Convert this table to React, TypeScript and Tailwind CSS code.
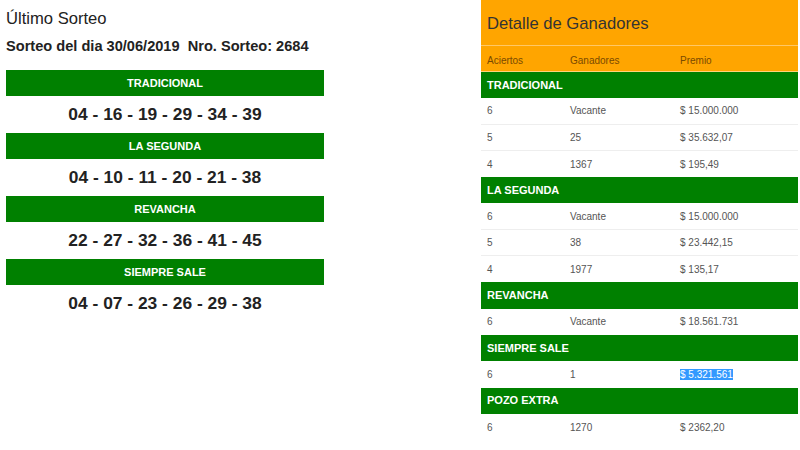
const draws = [
  { name: "TRADICIONAL", nums: "04 - 16 - 19 - 29 - 34 - 39" },
  { name: "LA SEGUNDA", nums: "04 - 10 - 11 - 20 - 21 - 38" },
  { name: "REVANCHA", nums: "22 - 27 - 32 - 36 - 41 - 45" },
  { name: "SIEMPRE SALE", nums: "04 - 07 - 23 - 26 - 29 - 38" },
];

type Row = [string, string, string, boolean?];

const winners: { name: string; rows: Row[] }[] = [
  {
    name: "TRADICIONAL",
    rows: [
      ["6", "Vacante", "$ 15.000.000"],
      ["5", "25", "$ 35.632,07"],
      ["4", "1367", "$ 195,49"],
    ],
  },
  {
    name: "LA SEGUNDA",
    rows: [
      ["6", "Vacante", "$ 15.000.000"],
      ["5", "38", "$ 23.442,15"],
      ["4", "1977", "$ 135,17"],
    ],
  },
  { name: "REVANCHA", rows: [["6", "Vacante", "$ 18.561.731"]] },
  { name: "SIEMPRE SALE", rows: [["6", "1", "$ 5.321.561", true]] },
  { name: "POZO EXTRA", rows: [["6", "1270", "$ 2362,20"]] },
];

function LastDraw() {
  return (
    <div className="w-[318px] ml-[6px]">
      <h3 className="pt-[9px] text-[16.6px] leading-[20px] text-[#222]">Último Sorteo</h3>
      <p className="mt-[8px] text-[14.6px] leading-[18px] font-bold text-[#222] whitespace-pre">
        {"Sorteo del dia 30/06/2019  Nro. Sorteo: 2684"}
      </p>
      <div className="mt-[15px] flex flex-col">
        {draws.map((d) => (
          <div key={d.name}>
            <div className="h-[26px] bg-[#008000] flex items-center justify-center text-white text-[11px] font-bold">
              {d.name}
            </div>
            <div className="h-[37px] flex items-center justify-center text-[17.4px] font-bold text-[#222]">
              {d.nums}
            </div>
          </div>
        ))}
      </div>
    </div>
  );
}

function WinnersTable() {
  return (
    <div className="w-[317px] ml-auto mr-[2px] text-[10px]">
      <div className="h-[46px] bg-[#ffa500] border-b border-[#ffc766] flex items-center px-[6px] pt-[4px] text-[16.6px] text-[#333]">
        Detalle de Ganadores
      </div>
      <div className="h-[26px] bg-[#ffa500] border-b border-[#ffd27a] flex items-center pt-[3px] text-[#7a4a00]">
        <span className="w-[83px] pl-[6px]">Aciertos</span>
        <span className="w-[110px] pl-[6px]">Ganadores</span>
        <span className="pl-[6px]">Premio</span>
      </div>
      {winners.map((g) => (
        <div key={g.name}>
          <div className="h-[26.3px] bg-[#008000] flex items-center px-[6px] text-white text-[11px] font-bold">
            {g.name}
          </div>
          {g.rows.map((r, i) => (
            <div
              key={i}
              className={`h-[26.3px] flex items-center text-[#555] ${
                i < g.rows.length - 1 ? "border-b border-[#eeeeee]" : ""
              }`}
            >
              <span className="w-[83px] pl-[6px]">{r[0]}</span>
              <span className="w-[110px] pl-[6px]">{r[1]}</span>
              <span className="pl-[6px]">
                {r[3] ? <span className="bg-[#3399ff] text-white">{r[2]}</span> : r[2]}
              </span>
            </div>
          ))}
        </div>
      ))}
    </div>
  );
}

export default function App() {
  return (
    <div className="w-[800px] h-[450px] bg-white flex font-['Liberation_Sans',Arial,sans-serif]">
      <LastDraw />
      <WinnersTable />
    </div>
  );
}
